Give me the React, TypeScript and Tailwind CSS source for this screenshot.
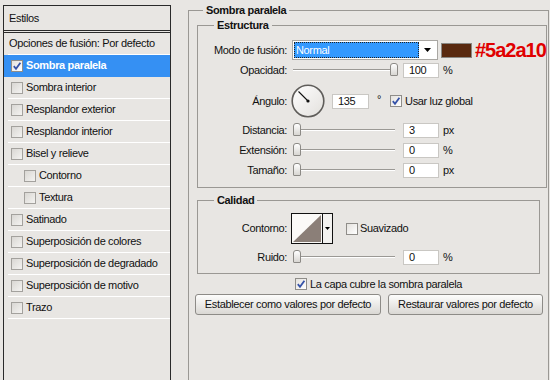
import React from 'react';

const styles = [
  { name: 'Sombra paralela', selected: true, checked: true },
  { name: 'Sombra interior' },
  { name: 'Resplandor exterior' },
  { name: 'Resplandor interior' },
  { name: 'Bisel y relieve' },
  { name: 'Contorno', indent: true },
  { name: 'Textura', indent: true },
  { name: 'Satinado' },
  { name: 'Superposición de colores' },
  { name: 'Superposición de degradado' },
  { name: 'Superposición de motivo' },
  { name: 'Trazo' },
];

function Check({ checked, light }: { checked?: boolean; light?: boolean }) {
  return (
    <span
      className={`flex h-[12px] w-[12px] shrink-0 items-center justify-center border ${
        light
          ? 'border-[#a3a19d] bg-gradient-to-br from-[#d9d7d3] to-[#f4f3f1]'
          : 'border-[#8f8d89] bg-gradient-to-br from-[#e4e2de] to-white'
      }`}
    >
      {checked && (
        <svg width="10" height="10" viewBox="0 0 10 10">
          <path d="M1.8 5.2 L4 7.8 L8.4 1.8" fill="none" stroke="#3552a8" strokeWidth="1.8" />
        </svg>
      )}
    </span>
  );
}

function Slider({ at }: { at: number }) {
  return (
    <div className="relative ml-[6px] h-[16px] w-[104px] shrink-0">
      <div className="absolute left-0 right-[2px] top-[7px] h-[2px] border-t border-[#9b9995] bg-white" />
      <div
        className="absolute top-[1px] h-[13px] w-[8px] rounded-t-[3px] rounded-b-[1px] border border-[#8c8a86] bg-gradient-to-b from-white to-[#d8d6d2]"
        style={{ left: at }}
      />
    </div>
  );
}

function Field({ value, className = '' }: { value: string; className?: string }) {
  return (
    <div className={`h-[15px] shrink-0 border border-[#c9c7c3] bg-white pl-[5px] leading-[13px] ${className}`}>{value}</div>
  );
}

function Label({ text }: { text: string }) {
  return <span className="w-[89px] shrink-0 text-right">{text}</span>;
}

function SliderRow({ label, at, value, unit }: { label: string; at: number; value: string; unit: string }) {
  return (
    <div className="mt-[4px] flex h-[16px] items-center">
      <Label text={label} />
      <Slider at={at} />
      <Field value={value} className="ml-[6px] w-[36px]" />
      <span className="ml-[4px]">{unit}</span>
    </div>
  );
}

export default function App() {
  return (
    <div className="flex h-[380px] w-[550px] overflow-hidden bg-[#e8e6e3] font-['Liberation_Sans',Arial,sans-serif] text-[11px] tracking-[-0.35px] text-[#111]">
      <aside className="ml-[3px] mt-[5px] h-[400px] w-[168px] shrink-0 border border-[#2a2a2a]">
        <div className="flex h-[27px] items-center border-b-[3px] border-double border-[#2a2a2a] pl-[5px]">Estilos</div>
        <div className="flex h-[22px] flex-col">
          <div className="flex h-[21px] items-center pl-[5px]">Opciones de fusión: Por defecto</div>
          <div className="ml-[4px] h-px bg-white" />
        </div>
        {styles.map((s) => (
          <div key={s.name} className={`flex h-[22px] flex-col ${s.selected ? 'bg-[#3590f3] text-white' : ''}`}>
            <div className={`flex h-[21px] items-center gap-[3px] ${s.indent ? 'pl-[20px]' : 'pl-[7px]'}`}>
              <Check checked={s.checked} light={!s.selected} />
              <span className={s.selected ? 'font-bold' : ''}>{s.name}</span>
            </div>
            <div className={`ml-[4px] h-px ${s.selected ? '' : 'bg-white'}`} />
          </div>
        ))}
      </aside>

      <fieldset className="ml-[17px] mt-[3px] h-[420px] w-[361px] shrink-0 border border-[#9a9894]">
        <legend className="ml-[14px] px-[3px] font-bold leading-[14px]">Sombra paralela</legend>

        <fieldset className="ml-[8px] mt-px w-[343px] border border-[#9a9894] pb-[9px]">
          <legend className="ml-[16px] px-[3px] font-bold leading-[14px]">Estructura</legend>

          <div className="mt-[8px] flex h-[20px] items-center">
            <Label text="Modo de fusión:" />
            <div className="ml-[5px] flex h-[20px] w-[146px] shrink-0 border border-[#a9a7a3] bg-white p-px">
              <div className="flex flex-1 items-center border border-dotted border-[#222] bg-[#3399ff] pl-px text-white">Normal</div>
              <div className="flex w-[17px] items-center justify-center">
                <svg width="7" height="4" viewBox="0 0 7 4">
                  <path d="M0 0 H7 L3.5 4 Z" fill="#000" />
                </svg>
              </div>
            </div>
            <div className="ml-[3px] h-[15px] w-[31px] shrink-0 border border-[#8a8884] bg-[#5a2a10]" />
            <span className="ml-[3px] whitespace-nowrap text-[20px] font-bold leading-none tracking-[-1px] text-[#e00000]">#5a2a10</span>
          </div>

          <div className="mt-[2px] flex h-[16px] items-center">
            <Label text="Opacidad:" />
            <Slider at={97} />
            <Field value="100" className="ml-[6px] w-[36px]" />
            <span className="ml-[4px]">%</span>
          </div>

          <div className="mt-[6px] flex h-[34px] items-center">
            <Label text="Ángulo:" />
            <svg className="ml-[4px] shrink-0" width="34" height="34" viewBox="0 0 34 34">
              <defs>
                <linearGradient id="dial" x1="0" y1="0" x2="1" y2="1">
                  <stop offset="0" stopColor="#ffffff" />
                  <stop offset="1" stopColor="#e2e0dc" />
                </linearGradient>
              </defs>
              <circle cx="17" cy="17" r="15.8" fill="url(#dial)" stroke="#5f5d5a" strokeWidth="1.6" />
              <line x1="17" y1="17" x2="7.5" y2="7.5" stroke="#111" strokeWidth="1.1" />
              <circle cx="17" cy="17" r="1.6" fill="#111" />
            </svg>
            <Field value="135" className="ml-[7px] w-[37px]" />
            <span className="ml-[8px] -mt-[4px]">°</span>
            <span className="ml-[9px]">
              <Check checked />
            </span>
            <span className="ml-[3px]">Usar luz global</span>
          </div>

          <SliderRow label="Distancia:" at={0} value="3" unit="px" />
          <SliderRow label="Extensión:" at={0} value="0" unit="%" />
          <SliderRow label="Tamaño:" at={0} value="0" unit="px" />
        </fieldset>

        <fieldset className="ml-[8px] mt-[5px] w-[343px] border border-[#9a9894] pb-[8px]">
          <legend className="ml-[16px] px-[3px] font-bold leading-[14px]">Calidad</legend>

          <div className="mt-[6px] flex h-[31px] items-center">
            <Label text="Contorno:" />
            <div className="ml-[4px] flex h-[31px] w-[42px] shrink-0 border border-[#111]">
              <svg width="30" height="29" viewBox="0 0 30 29" className="shrink-0">
                <rect x="0" y="0" width="30" height="29" fill="#fbfaf8" />
                <path d="M1 28 L29 1 L29 28 Z" fill="#8b7f78" />
              </svg>
              <div className="flex flex-1 items-center justify-center border-l border-[#111] bg-[#f3f2f0]">
                <svg width="5" height="3" viewBox="0 0 5 3">
                  <path d="M0 0 H5 L2.5 3 Z" fill="#000" />
                </svg>
              </div>
            </div>
            <span className="ml-[13px]">
              <Check />
            </span>
            <span className="ml-[2px]">Suavizado</span>
          </div>

          <div className="mt-[5px] flex h-[16px] items-center">
            <Label text="Ruido:" />
            <Slider at={0} />
            <Field value="0" className="ml-[6px] w-[36px]" />
            <span className="ml-[4px]">%</span>
          </div>
        </fieldset>

        <div className="mt-[3px] flex h-[14px] items-center pl-[106px]">
          <Check checked />
          <span className="ml-[3px]">La capa cubre la sombra paralela</span>
        </div>

        <div className="ml-[6px] mt-[3px] flex gap-[7px]">
          <button type="button" className="h-[21px] w-[186px] rounded-[3px] border border-[#8d8b87] bg-gradient-to-b from-[#fdfdfc] to-[#dad8d4] text-center">
            Establecer como valores por defecto
          </button>
          <button type="button" className="h-[21px] w-[155px] rounded-[3px] border border-[#8d8b87] bg-gradient-to-b from-[#fdfdfc] to-[#dad8d4] text-center">
            Restaurar valores por defecto
          </button>
        </div>
      </fieldset>
    </div>
  );
}
